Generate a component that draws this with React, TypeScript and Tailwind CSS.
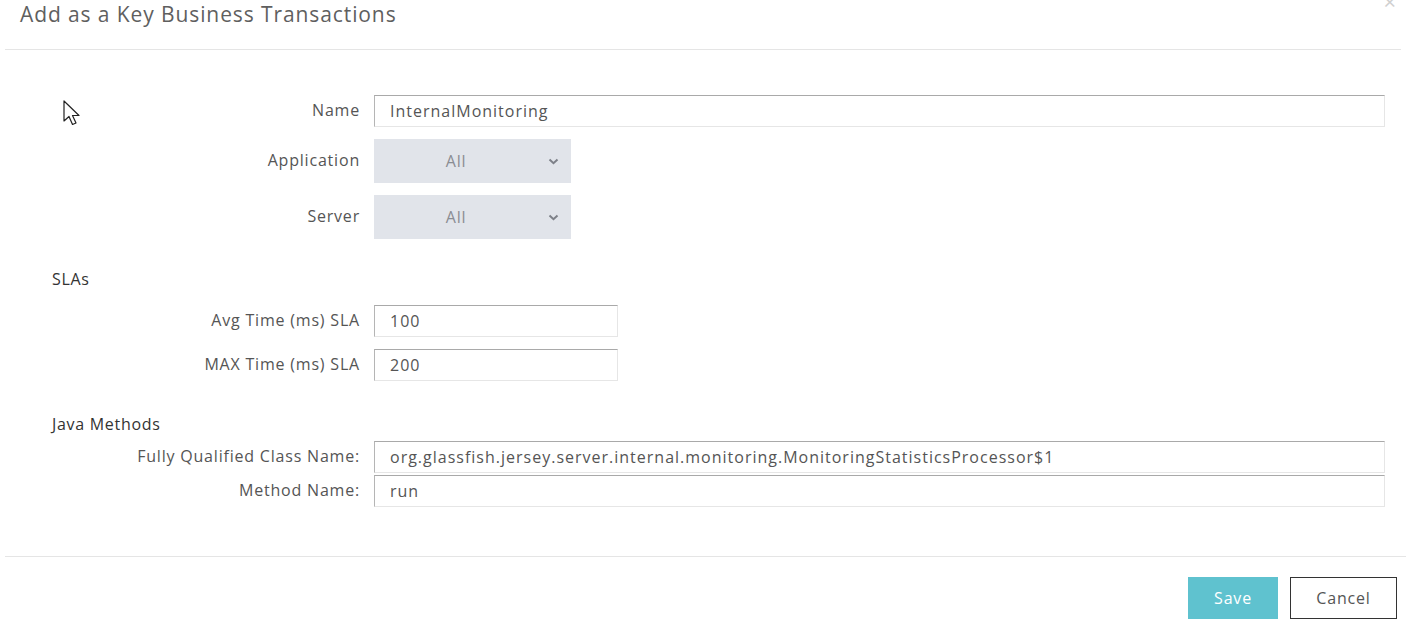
import React from 'react';

const font = { fontFamily: '"Open Sans", "Noto Sans", sans-serif' };

const TextInput: React.FC<{ value: string; className?: string }> = ({ value, className = '' }) => (
  <div
    className={`h-[32px] flex items-center px-[15px] bg-white border border-[#e6e6e6] border-t-[#a9a9a9] border-l-[#b5b5b5] text-[16px] tracking-[1px] text-[#555] whitespace-nowrap overflow-hidden ${className}`}
  >
    {value}
  </div>
);

const Select: React.FC<{ value: string }> = ({ value }) => (
  <div className="w-[197px] h-[44px] bg-[#e1e4ea] flex items-center relative text-[16px] tracking-[0.7px] text-[#8a8d93]">
    <span className="w-full text-center pr-[34px] pl-[1px]">{value}</span>
    <svg className="absolute right-[12px] top-[19px]" width="11" height="7" viewBox="0 0 11 7">
      <path d="M1.5 1.5 L5.5 5.2 L9.5 1.5" fill="none" stroke="#7d8088" strokeWidth="2" />
    </svg>
  </div>
);

const Row: React.FC<{ label: string; children: React.ReactNode; className?: string }> = ({ label, children, className = '' }) => (
  <div className={`flex items-center ${className}`}>
    <div className="w-[308px] text-right text-[16px] tracking-[0.8px] text-[#555] whitespace-nowrap -mt-[2px]">{label}</div>
    <div className="ml-[14px] flex-1 flex">{children}</div>
  </div>
);

export default function App() {
  return (
    <div className="w-[1406px] h-[626px] bg-white relative overflow-hidden" style={font}>
      {/* header */}
      <div className="h-[50px] mx-[5px] border-b border-[#e5e5e5] flex items-start">
        <h4 className="pl-[15px] pt-0 text-[21px] tracking-[0.9px] leading-[28px] text-[#5f5f5f]">Add as a Key Business Transactions</h4>
      </div>
      <span className="absolute right-[10px] top-[-10px] text-[22px] text-[#d0d0d0] leading-none">×</span>

      {/* cursor */}
      <svg className="absolute left-[63px] top-[100px]" width="20" height="30" viewBox="0 0 20 30">
        <path d="M1 1 L1 21 L6 16.5 L9.5 24.5 L13 23 L9.5 15.5 L16 15.5 Z" fill="#fff" stroke="#222" strokeWidth="1.2" strokeLinejoin="round" />
      </svg>

      {/* body */}
      <div className="pl-[52px] pr-[21px]">
        <Row label="Name" className="mt-[45px]">
          <TextInput value="InternalMonitoring" className="w-full" />
        </Row>
        <Row label="Application" className="mt-[12px]">
          <Select value="All" />
        </Row>
        <Row label="Server" className="mt-[12px]">
          <Select value="All" />
        </Row>

        <div className="mt-[29px] text-[16px] tracking-[0.7px] text-[#333] leading-[22px]">SLAs</div>
        <Row label="Avg Time (ms) SLA" className="mt-[15px]">
          <TextInput value="100" className="w-[244px]" />
        </Row>
        <Row label="MAX Time (ms) SLA" className="mt-[12px]">
          <TextInput value="200" className="w-[244px]" />
        </Row>

        <div className="mt-[32px] text-[16px] tracking-[0.7px] text-[#333] leading-[22px]">Java Methods</div>
        <Row label="Fully Qualified Class Name:" className="mt-[6px]">
          <TextInput value="org.glassfish.jersey.server.internal.monitoring.MonitoringStatisticsProcessor$1" className="w-full" />
        </Row>
        <Row label="Method Name:" className="mt-[2px]">
          <TextInput value="run" className="w-full" />
        </Row>
      </div>

      {/* footer */}
      <div className="absolute left-[5px] right-0 top-[556px] border-t border-[#e5e5e5] flex justify-end gap-[12px] pt-[20px] pr-[9px]">
        <button className="w-[90px] h-[42px] bg-[#5fc2cf] text-white text-[16px] tracking-[0.8px]">Save</button>
        <button className="w-[107px] h-[42px] bg-white border border-[#333] text-[#555] text-[16px] tracking-[0.8px]">Cancel</button>
      </div>
    </div>
  );
}
